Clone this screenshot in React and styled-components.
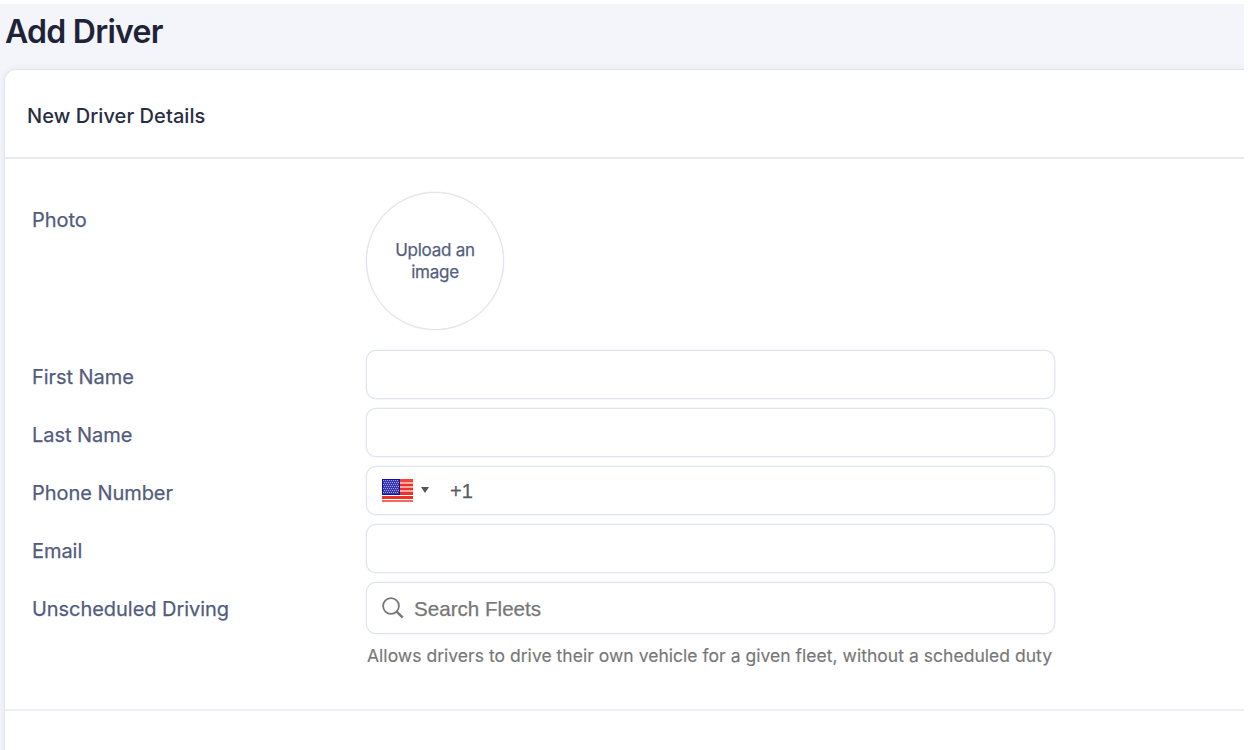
import React from "react";
import styled, { createGlobalStyle } from "styled-components";

const GlobalStyle = createGlobalStyle`
  * { box-sizing: border-box; }
  body { margin: 0; background: #fff; font-family: Inter, "Liberation Sans", sans-serif; }
`;

const Page = styled.main`
  width: 1244px;
  height: 746px;
  margin-top: 4px;
  padding-left: 4px;
  background: #f4f5fa;
  overflow: hidden;
`;

const Title = styled.h1`
  margin: 0;
  height: 65px;
  padding: 8px 0 0 1px;
  color: #1f2338;
  font-size: 32px;
  font-weight: 600;
  line-height: 40px;
  letter-spacing: -0.75px;
`;

const Card = styled.section`
  height: 720px;
  background: #fff;
  border: 1px solid #e4e4ed;
  border-right: 0;
  border-top-left-radius: 12px;
  box-shadow: 0 0 6px rgba(40, 40, 80, 0.07);
`;

const CardHeader = styled.header`
  height: 89px;
  padding: 32px 22px 0;
  border-bottom: 2px solid #e9eaf1;
`;

const CardTitle = styled.h2`
  margin: 0;
  color: #292d43;
  font-size: 20px;
  font-weight: 500;
  line-height: 28px;
  letter-spacing: 0.07px;
`;

const Form = styled.form`
  height: 552px;
  padding: 33px 0 0 27px;
  border-bottom: 2px solid #eceef5;
`;

const Row = styled.div`
  display: grid;
  grid-template-columns: 334px 689px;
  align-items: start;
  height: ${(p) => p.$height ?? 58}px;
`;

const Label = styled.label`
  padding-top: ${(p) => p.$top ?? 13}px;
  color: #535c7e;
  font-size: 20px;
  line-height: 28px;
  letter-spacing: -0.05px;
  -webkit-text-stroke: 0.25px currentColor;
`;

const Upload = styled.button`
  width: 138px;
  height: 138px;
  padding: 0;
  border: 1px solid #e1e2ed;
  border-radius: 50%;
  background: #fff;
  box-shadow: 0 0 0 0.5px #eef0f6;
  color: #555e80;
  font: 400 17px/22px Inter, "Liberation Sans", sans-serif;
  letter-spacing: -0.25px;
  -webkit-text-stroke: 0.25px currentColor;
`;

const Field = styled.div`
  display: flex;
  align-items: center;
  height: ${(p) => p.$height ?? 49}px;
  padding: 0 15px;
  border: 1px solid #e1e4f0;
  border-radius: 10px;
  background: #fff;
  box-shadow: 0 0 0 0.5px #eef0f6;
`;

const Input = styled.input`
  flex: 1;
  min-width: 0;
  padding: ${(p) => p.$drop ?? 0}px 0 0;
  border: 0;
  outline: 0;
  background: transparent;
  color: #555b66;
  font: ${(p) => p.$size ?? 20}px "Liberation Sans", Arial, sans-serif;
  -webkit-text-stroke: 0.25px currentColor;
  &::placeholder { color: #777; opacity: 1; }
`;

const Flag = styled.svg`
  width: 31px;
  height: 23px;
`;

const Caret = styled.svg`
  width: 8px;
  height: 6px;
  margin: 0 21px 2px 8px;
`;

const SearchIcon = styled.svg`
  width: 22px;
  height: 22px;
  margin-right: 10px;
`;

const Hint = styled.p`
  margin: 10px 0 0 1px;
  color: #777;
  font-size: 17.5px;
  line-height: 24px;
  letter-spacing: 0.03px;
  white-space: nowrap;
  -webkit-text-stroke: 0.15px currentColor;
`;

const stars = [];
for (let y = 1; y < 15; y += 2) {
  for (let x = y % 4 === 1 ? 1 : 2; x < 17; x += 2) stars.push([x, y]);
}

function UsFlag() {
  return (
    <Flag viewBox="0 0 31 23" shapeRendering="crispEdges">
      <rect width="31" height="23" fill="#fff" />
      <rect width="31" height="16" fill="#ffaba5" />
      <rect width="31" height="3" fill="#f4453a" />
      <rect y="5" width="31" height="2" fill="#f03125" />
      <rect y="9" width="31" height="2" fill="#f03125" />
      <rect y="13" width="31" height="3" fill="#f03125" />
      <rect y="17" width="31" height="3" fill="#f03125" />
      <rect y="21" width="31" height="2" fill="#f26960" />
      <rect width="18" height="16" fill="#10109b" />
      <rect x="1" y="1" width="16" height="14" fill="#3636ae" />
      {stars.map(([x, y]) => (
        <rect key={`${x}-${y}`} x={x} y={y} width="1" height="1" fill="#a4a4e0" />
      ))}
    </Flag>
  );
}

export default function App() {
  return (
    <>
      <GlobalStyle />
      <Page>
        <Title>Add Driver</Title>
        <Card>
          <CardHeader>
            <CardTitle>New Driver Details</CardTitle>
          </CardHeader>
          <Form>
            <Row $height={158}>
              <Label $top={14}>Photo</Label>
              <Upload type="button">Upload an<br />image</Upload>
            </Row>
            <Row>
              <Label htmlFor="first">First Name</Label>
              <Field><Input id="first" /></Field>
            </Row>
            <Row>
              <Label htmlFor="last">Last Name</Label>
              <Field><Input id="last" /></Field>
            </Row>
            <Row>
              <Label htmlFor="phone">Phone Number</Label>
              <Field>
                <UsFlag />
                <Caret viewBox="0 0 8 6"><path d="M0 0h8L4 6z" fill="#555" /></Caret>
                <Input id="phone" $drop={1} defaultValue="+1" />
              </Field>
            </Row>
            <Row>
              <Label htmlFor="email">Email</Label>
              <Field><Input id="email" /></Field>
            </Row>
            <Row>
              <Label htmlFor="fleets">Unscheduled Driving</Label>
              <div>
                <Field $height={52}>
                  <SearchIcon viewBox="0 0 22 22" fill="none" stroke="#777">
                    <circle cx="9" cy="9" r="7.9" strokeWidth="1.8" />
                    <path d="M14.7 14.7l6 5.9" strokeWidth="2.4" />
                  </SearchIcon>
                  <Input id="fleets" $size={20.6} $drop={2} placeholder="Search Fleets" />
                </Field>
                <Hint>Allows drivers to drive their own vehicle for a given fleet, without a scheduled duty</Hint>
              </div>
            </Row>
          </Form>
        </Card>
      </Page>
    </>
  );
}
